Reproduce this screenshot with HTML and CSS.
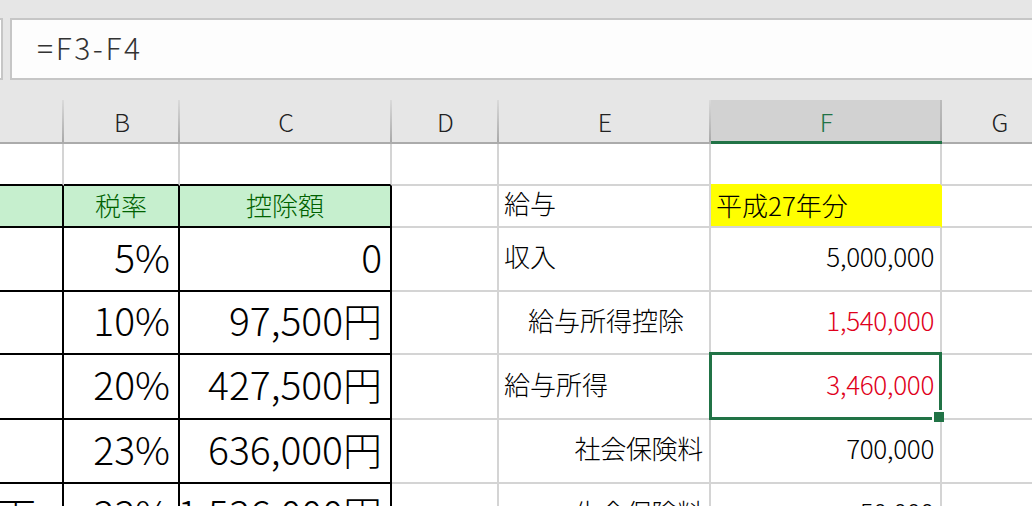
FILE: index.html
```html
<!DOCTYPE html>
<html lang="ja">
<head>
  <meta charset="UTF-8" />
  <title>給与所得</title>
  <link rel="stylesheet" href="styles.css">
</head>
<body>
  <div class="topbar">
    <div class="namebox"></div>
    <div class="formula">=F3-F4</div>
  </div>

  <div class="sheet">
    <div class="hd"></div>
    <div class="hd">B</div>
    <div class="hd">C</div>
    <div class="hd">D</div>
    <div class="hd">E</div>
    <div class="hd on">F</div>
    <div class="hd">G</div>

    <!-- row 1 -->
    <div class="c tb"></div>
    <div class="c tb"></div>
    <div class="c tb"></div>
    <div class="c"></div>
    <div class="c"></div>
    <div class="c ytop"></div>
    <div class="c"></div>

    <!-- row 2 -->
    <div class="c t head"></div>
    <div class="c t head mid">税率</div>
    <div class="c t head mid">控除額</div>
    <div class="c"></div>
    <div class="c">給与</div>
    <div class="c yellow">平成27年分</div>
    <div class="c"></div>

    <!-- row 3 -->
    <div class="c t"></div>
    <div class="c t big right">5%</div>
    <div class="c t big right">0</div>
    <div class="c"></div>
    <div class="c">収入</div>
    <div class="c right">5,000,000</div>
    <div class="c"></div>

    <!-- row 4 -->
    <div class="c t"></div>
    <div class="c t big right">10%</div>
    <div class="c t big right">97,500円</div>
    <div class="c"></div>
    <div class="c indent">給与所得控除</div>
    <div class="c right red">1,540,000</div>
    <div class="c"></div>

    <!-- row 5 -->
    <div class="c t"></div>
    <div class="c t big right">20%</div>
    <div class="c t big right">427,500円</div>
    <div class="c"></div>
    <div class="c">給与所得</div>
    <div class="c right red sel">3,460,000</div>
    <div class="c"></div>

    <!-- row 6 -->
    <div class="c t"></div>
    <div class="c t big right">23%</div>
    <div class="c t big right">636,000円</div>
    <div class="c"></div>
    <div class="c right label">社会保険料</div>
    <div class="c right">700,000</div>
    <div class="c"></div>

    <!-- row 7 -->
    <div class="c t big right cut">以下</div>
    <div class="c t big right">33%</div>
    <div class="c t big right">1,536,000円</div>
    <div class="c"></div>
    <div class="c right label">生命保険料</div>
    <div class="c right">50,000</div>
    <div class="c"></div>
  </div>
</body>
</html>
```

FILE: styles.css
```css
body {
  margin: 0;
  width: 1032px;
  height: 506px;
  overflow: hidden;
  background: #fff;
  font-family: "Noto Sans CJK JP", "Noto Sans", sans-serif;
  font-weight: 300;
  color: #000;
}
.topbar {
  display: flex;
  height: 100px;
  padding-top: 18px;
  box-sizing: border-box;
  background: #e6e6e6;
}
.namebox {
  width: 3px;
  height: 62px;
  box-sizing: border-box;
  border: 2px solid #c6c6c6;
  border-left: 0;
  background: #fff;
}
.formula {
  flex: 1;
  height: 62px;
  margin-left: 7px;
  padding-left: 25px;
  box-sizing: border-box;
  border: 2px solid #c6c6c6;
  border-right: 0;
  background: #fdfdfd;
  font-size: 30px;
  line-height: 54px;
  color: #333;
  letter-spacing: 2.6px;
}
.sheet {
  display: grid;
  grid-template-columns: 64px 116px 212px 107px 212px 231px 116px;
  grid-template-rows: 44px 42px 42px 64px 63px 65px 64px 64px;
  width: 1058px;
}
.hd {
  display: flex;
  align-items: center;
  justify-content: center;
  box-sizing: border-box;
  border-bottom: 2px solid #ababab;
  background: linear-gradient(#dadada, #a9a9a9) right / 2px 100% no-repeat, #e6e6e6;
  font-size: 25px;
  color: #222;
}
.hd.on {
  background: linear-gradient(#bcbcbc, #a9a9a9) right / 2px 100% no-repeat, #d2d2d2;
  border-bottom: 3px solid #217346;
  color: #217346;
}
.c {
  display: flex;
  align-items: center;
  box-sizing: border-box;
  padding: 0 5px 7px;
  border-right: 2px solid #d4d4d4;
  border-bottom: 2px solid #d4d4d4;
  font-size: 26px;
  white-space: nowrap;
}
.tb {
  border-bottom-color: #000;
}
.t {
  border-color: #000;
}
.head {
  background: #c6efce;
  color: #006100;
  padding-bottom: 4px;
}
.mid {
  justify-content: center;
}
.right {
  justify-content: flex-end;
}
.big {
  font-size: 39px;
  padding-right: 8px;
}
.c.right:not(.big) {
  padding-right: 6px;
  letter-spacing: -0.3px;
}
.c.label {
  padding-right: 4px;
  letter-spacing: 0;
}
.indent {
  padding-left: 29px;
}
.red {
  color: #e0001b;
}
.yellow {
  background: #ffff00;
  border-right-color: #ffff00;
  padding-bottom: 4px;
}
.ytop {
  border-bottom-color: #ffff00;
}
.cut {
  padding-right: 26px;
  overflow: hidden;
  align-items: flex-start;
  padding-top: 2px;
}
.sel {
  position: relative;
}
.sel::before {
  content: "";
  position: absolute;
  top: -3px;
  left: -2px;
  right: -2px;
  bottom: -2px;
  border: 3px solid #217346;
  z-index: 1;
}
.sel::after {
  content: "";
  position: absolute;
  right: -4px;
  bottom: -4px;
  width: 10px;
  height: 10px;
  background: #217346;
  border-top: 2px solid #fff;
  border-left: 2px solid #fff;
  z-index: 2;
}
```
